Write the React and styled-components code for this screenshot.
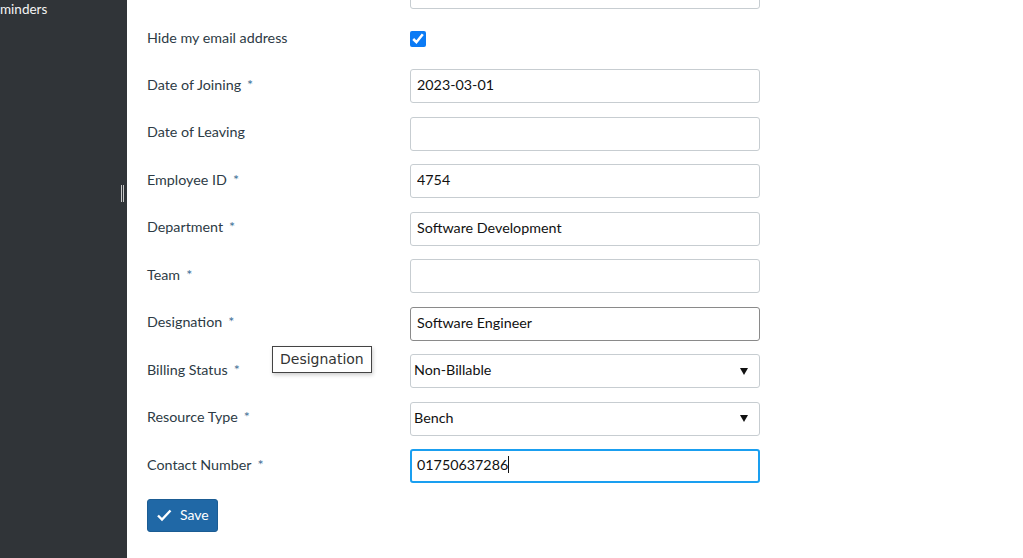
import styled, { createGlobalStyle } from 'styled-components'

const GlobalStyle = createGlobalStyle`
  html, body {
    margin: 0;
    padding: 0;
    height: 100%;
    overflow: hidden;
  }
  body {
    font-family: Lato, "Liberation Sans", sans-serif;
    background: #fff;
  }
`

const Page = styled.div`
  display: flex;
  width: 1023px;
  height: 558px;
  overflow: hidden;
`

const Sidebar = styled.nav`
  position: relative;
  width: 127px;
  flex-shrink: 0;
  background: #303438;
  color: #f5f5f5;
  font-size: 13.5px;
  overflow: hidden;
`

const NavItem = styled.div`
  line-height: 18px;
  white-space: nowrap;
`

const Splitter = styled.div`
  position: absolute;
  top: 185px;
  right: 3px;
  width: 3px;
  height: 17px;
  border-left: 1px solid #c8c8c8;
  border-right: 1px solid #c8c8c8;
  box-sizing: border-box;
`

const Main = styled.main`
  flex: 1;
  padding-left: 20px;
  overflow: hidden;
`

const Form = styled.form`
  display: grid;
  grid-template-columns: 263px 350px;
  row-gap: 13.5px;
  margin-top: -25px;
  align-items: center;
`

const Label = styled.label`
  font-size: 14.3px;
  color: #2d3b45;
  line-height: 20px;
  padding-bottom: 3px;
`

const Required = styled.span`
  color: #3d6e96;
  margin-left: 6px;
`

const Input = styled.input`
  box-sizing: border-box;
  width: 350px;
  height: 34px;
  padding: 0 6px 3px;
  font-family: Lato, "Liberation Sans", sans-serif;
  font-size: 14.3px;
  color: #111;
  border: 1px solid ${({ $tone }) => ($tone === 'hover' ? '#8a8a8a' : '#c7cdd1')};
  border-radius: 3px;
  outline: none;
  background: #fff;
`

const CheckCell = styled.div`
  height: 33px;
  display: flex;
  align-items: center;
`

const Checkbox = styled.input`
  width: 16px;
  height: 16px;
  margin: 0;
  accent-color: #0b7bf5;
`

const SelectBox = styled.div`
  box-sizing: border-box;
  width: 350px;
  height: 34px;
  display: flex;
  align-items: center;
  justify-content: space-between;
  padding: 0 11px 3px 3px;
  font-size: 14.3px;
  color: #111;
  border: 1px solid #c7cdd1;
  border-radius: 3px;
`

const Caret = styled.span`
  width: 0;
  height: 0;
  margin-top: 3px;
  border-left: 4.5px solid transparent;
  border-right: 4.5px solid transparent;
  border-top: 7px solid #111;
`

const DesignationCell = styled.div`
  position: relative;
`

const Tooltip = styled.div`
  position: absolute;
  left: -138px;
  top: 39px;
  padding: 4px 7px 5px;
  font-family: "DejaVu Sans", sans-serif;
  font-size: 14px;
  line-height: 16px;
  color: #333;
  background: #fff;
  border: 1px solid #444;
  box-shadow: 1px 2px 4px rgba(0, 0, 0, 0.2);
  white-space: nowrap;
`

const TextCaret = styled.span`
  display: inline-block;
  width: 1px;
  height: 17px;
  background: #111;
  vertical-align: middle;
`

const ContactBox = styled.div`
  box-sizing: border-box;
  width: 350px;
  height: 34px;
  display: flex;
  align-items: center;
  padding: 0 5px 3px;
  font-size: 14.3px;
  color: #111;
  border: 2px solid #1a9ff0;
  border-radius: 3px;
`

const Actions = styled.div`
  grid-column: 1 / -1;
  padding-top: 2px;
`

const SaveButton = styled.button`
  display: inline-flex;
  align-items: center;
  gap: 8px;
  height: 33px;
  padding: 0 8px 1px 8px;
  font-family: Lato, "Liberation Sans", sans-serif;
  font-size: 14px;
  color: #fff;
  background: #2068a6;
  border: 1px solid #1b5c93;
  border-radius: 3px;
`

const fields = [
  { label: 'Date of Joining', required: true, value: '2023-03-01' },
  { label: 'Date of Leaving', value: '' },
  { label: 'Employee ID', required: true, value: '4754' },
  { label: 'Department', required: true, value: 'Software Development' },
  { label: 'Team', required: true, value: '' },
]

const App = () => {
  return (
    <>
      <GlobalStyle />
      <Page>
        <Sidebar>
          <NavItem>minders</NavItem>
          <Splitter />
        </Sidebar>
        <Main>
          <Form onSubmit={(e) => e.preventDefault()}>
            <Label />
            <Input readOnly value="" aria-label="Email" />

            <Label>Hide my email address</Label>
            <CheckCell>
              <Checkbox type="checkbox" defaultChecked />
            </CheckCell>

            {fields.map((f) => [
              <Label key={f.label + '-l'}>
                {f.label}
                {f.required && <Required>*</Required>}
              </Label>,
              <Input key={f.label + '-i'} readOnly value={f.value} />,
            ])}

            <Label>
              Designation<Required>*</Required>
            </Label>
            <DesignationCell>
              <Input readOnly $tone="hover" value="Software Engineer" />
              <Tooltip>Designation</Tooltip>
            </DesignationCell>

            <Label>
              Billing Status<Required>*</Required>
            </Label>
            <SelectBox>
              Non-Billable <Caret />
            </SelectBox>

            <Label>
              Resource Type<Required>*</Required>
            </Label>
            <SelectBox>
              Bench <Caret />
            </SelectBox>

            <Label>
              Contact Number<Required>*</Required>
            </Label>
            <ContactBox>
              01750637286
              <TextCaret />
            </ContactBox>

            <Actions>
              <SaveButton type="submit">
                <svg width="16" height="16" viewBox="0 0 16 16" fill="none">
                  <path d="M2 8.5l4 4L14.5 3.5" stroke="#fff" strokeWidth="2.4" />
                </svg>
                Save
              </SaveButton>
            </Actions>
          </Form>
        </Main>
      </Page>
    </>
  )
}

export default App
